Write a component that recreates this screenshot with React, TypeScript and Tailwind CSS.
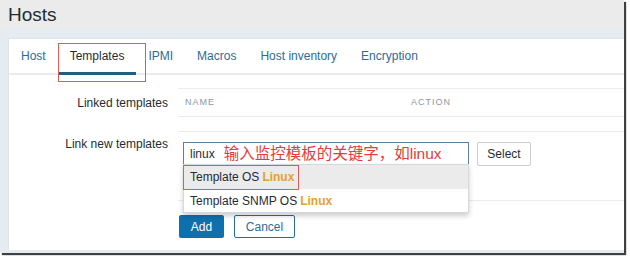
import React from "react";

const tabs = ["Host", "Templates", "IPMI", "Macros", "Host inventory", "Encryption"];

const App = () => {
  return (
    <div className="w-[630px] h-[260px] bg-white font-['Liberation_Sans',Arial,sans-serif] text-[12px] text-[#1f2c33]">
      <div className="w-[624px] h-[253px] bg-[#ebebeb] shadow-[2px_2px_1px_rgba(0,0,0,0.75)] overflow-hidden flex flex-col">
        <div className="h-[28px] px-[8px] flex items-center">
          <h1 className="text-[19px] leading-none text-[#1f2c33]">Hosts</h1>
        </div>
        <div className="flex-1 bg-[#e4ecf2] pt-[10px] pl-[8px] pb-[3px] flex">
          <div className="flex-1 bg-white border-l border-t border-[#dfe4e7] flex flex-col">
            {/* tabs */}
            <div className="relative h-[36px] flex border-b-2 border-[#ebebeb]">
              {tabs.map((t) => (
                <div
                  key={t}
                  className={
                    t === "Templates"
                      ? "relative px-[12px] flex items-center text-[#1f2c33] border-b-[3px] border-[#1f5f7f] -mb-[2px]"
                      : "px-[12px] flex items-center text-[#2f6a94]"
                  }
                >
                  {t}
                </div>
              ))}
              <div className="absolute left-[49px] top-[4px] w-[88px] h-[39px] border border-[#e05a5a]" />
            </div>

            {/* form */}
            <div className="pt-[13px] flex flex-col">
              <div className="flex">
                <div className="w-[169px] pr-[10px] text-right pt-[6px]">Linked templates</div>
                <div className="flex-1 h-[29px] border-y border-[#ebebeb] flex items-center text-[9px] tracking-[1px] text-[#8a99a2]">
                  <span className="pl-[7px] w-[233px]">NAME</span>
                  <span>ACTION</span>
                </div>
              </div>

              <div className="flex mt-[14px]">
                <div className="w-[169px] pr-[10px] text-right pt-[4px]">Link new templates</div>
                <div className="flex-1 h-[70px] border-y border-[#ebebeb] pl-[5px] pt-[10px]">
                  <div className="flex items-start gap-[8px]">
                    <div className="relative">
                      <div className="w-[286px] h-[23px] border border-[#5b7f99] flex items-center pl-[6px] gap-[9px]">
                        <span>linux</span>
                        <span className="text-[15.5px] text-[#e53b3b] font-['Liberation_Sans','Noto_Sans_CJK_SC',sans-serif]">
                          输入监控模板的关键字，如linux
                        </span>
                      </div>
                      <div className="absolute left-0 top-[22px] w-[286px] bg-white border border-[#d3d9dd] shadow-[0_3px_5px_rgba(0,0,0,0.2)] z-10">
                        <div className="relative h-[24px] bg-[#ebebeb] flex items-center pl-[6px]">
                          Template OS <span className="ml-[3px] text-[#e8a02c] font-bold">Linux</span>
                          <div className="absolute left-[-1px] top-0 w-[116px] h-[25px] border border-[#e05a5a]" />
                        </div>
                        <div className="h-[23px] flex items-center pl-[6px]">
                          Template SNMP OS <span className="ml-[3px] text-[#e8a02c] font-bold">Linux</span>
                        </div>
                      </div>
                    </div>
                    <button className="h-[24px] px-[7px] w-[54px] bg-white border border-[#c8ced2] rounded-[2px] text-[12px] text-[#1f2c33]">
                      Select
                    </button>
                  </div>
                </div>
              </div>

              <div className="flex gap-[10px] pl-[170px] mt-[14px]">
                <button className="h-[23px] w-[45px] bg-[#0f70ad] text-white rounded-[2px] text-[12px]">Add</button>
                <button className="h-[23px] w-[61px] bg-white border border-[#2c6c97] text-[#2c6c97] rounded-[2px] text-[12px]">
                  Cancel
                </button>
              </div>
            </div>
          </div>
        </div>
      </div>
    </div>
  );
};

export default App;
